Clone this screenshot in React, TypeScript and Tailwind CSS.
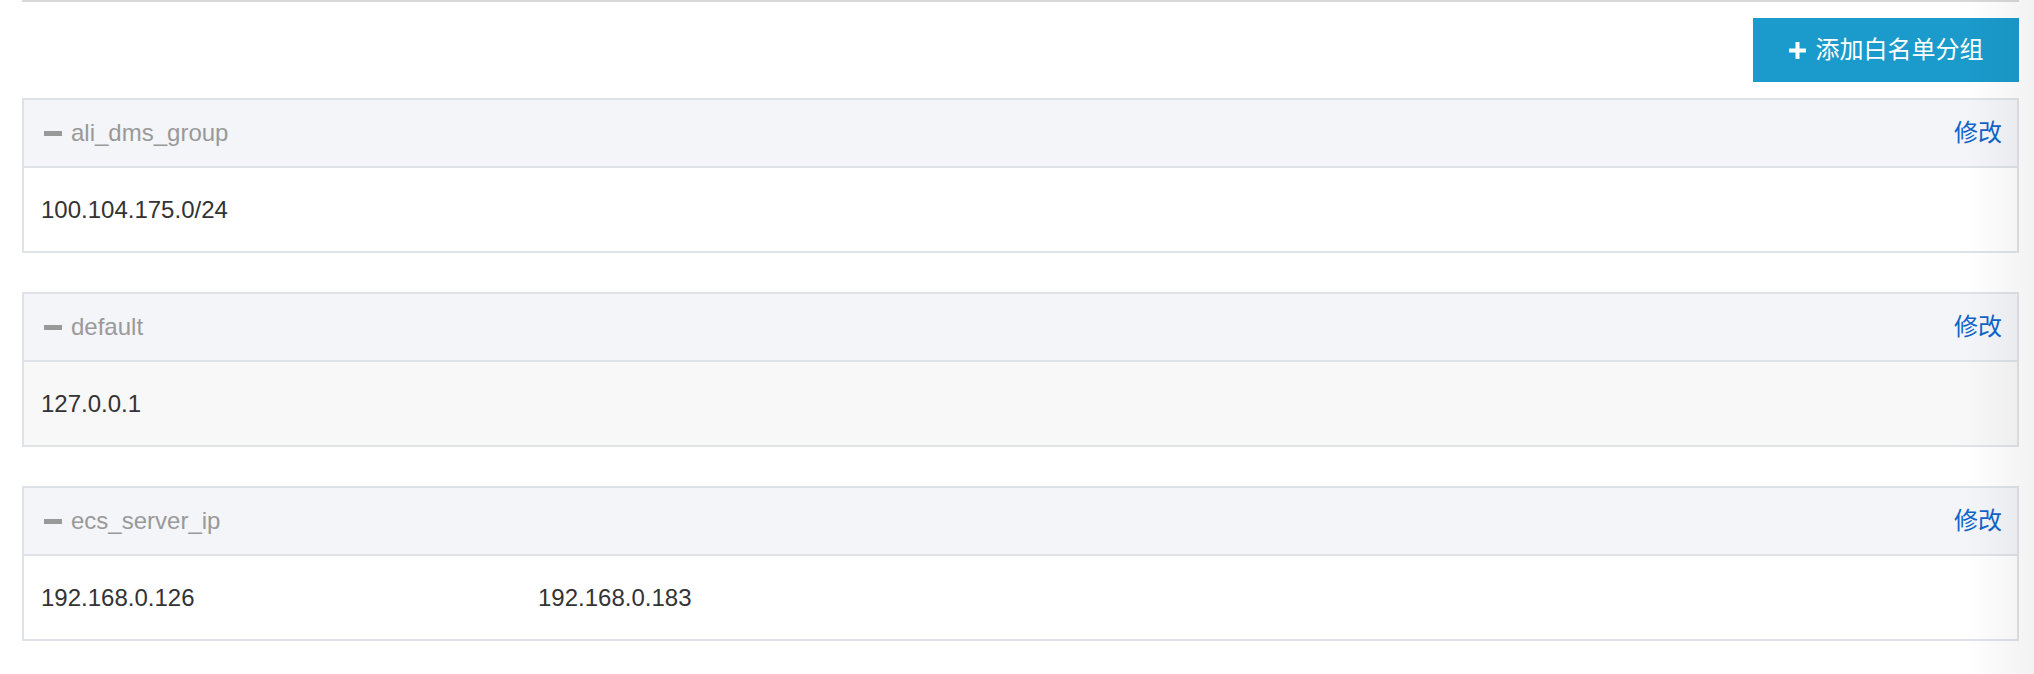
import React from 'react'

interface Group {
  name: string
  ips: string[]
  hovered?: boolean
}

const groups: Group[] = [
  { name: 'ali_dms_group', ips: ['100.104.175.0/24'] },
  { name: 'default', ips: ['127.0.0.1'], hovered: true },
  { name: 'ecs_server_ip', ips: ['192.168.0.126', '192.168.0.183'] },
]

function GroupPanel({ group }: { group: Group }) {
  return (
    <div className="border-2 border-[#dfe3e8]">
      {/* Header */}
      <div className="flex items-center justify-between h-[68px] pl-[20px] pr-[15px] bg-[#f4f5f9] border-b-2 border-[#dfe3e8]">
        <div className="flex items-center gap-[9px] text-[#999]">
          <span className="block w-[18px] h-[5px] bg-[#999]" />
          <span className="text-[24px] leading-none">{group.name}</span>
        </div>
        <a href="#" className="text-[24px] leading-none text-[#0f63c9]">
          修改
        </a>
      </div>

      {/* IP list */}
      <div
        className={
          group.hovered
            ? 'flex items-center h-[83px] px-[17px] bg-[#f8f8f8] text-[#333]'
            : 'flex items-center h-[83px] px-[17px] bg-white text-[#333]'
        }
      >
        {group.ips.map((ip) => (
          <span key={ip} className="w-[497px] text-[24px] leading-none">
            {ip}
          </span>
        ))}
      </div>
    </div>
  )
}

export default function App() {
  return (
    <div
      className="relative w-[2034px] h-[674px] bg-white overflow-hidden"
      style={{ fontFamily: '"Liberation Sans", "Noto Sans CJK SC", sans-serif' }}
    >
      <div className="pl-[22px] pr-[15px]">
        <div className="h-[2px] bg-[#d8d8d8]" />

        <div className="flex justify-end pt-[16px] pb-[16px]">
          <button className="flex items-center justify-center gap-[10px] w-[266px] h-[64px] bg-[#1a9bcb] text-white text-[24px]">
            <svg width="17" height="17" viewBox="0 0 17 17" fill="white">
              <rect x="6.5" y="0" width="4" height="17" />
              <rect x="0" y="6.5" width="17" height="4" />
            </svg>
            <span className="leading-none">添加白名单分组</span>
          </button>
        </div>

        <div className="flex flex-col gap-[39px]">
          {groups.map((g) => (
            <GroupPanel key={g.name} group={g} />
          ))}
        </div>
      </div>

      {/* right side shadow */}
      <div className="pointer-events-none absolute top-0 right-0 bottom-0 w-[70px] bg-gradient-to-r from-transparent to-black/[0.05]" />
    </div>
  )
}
